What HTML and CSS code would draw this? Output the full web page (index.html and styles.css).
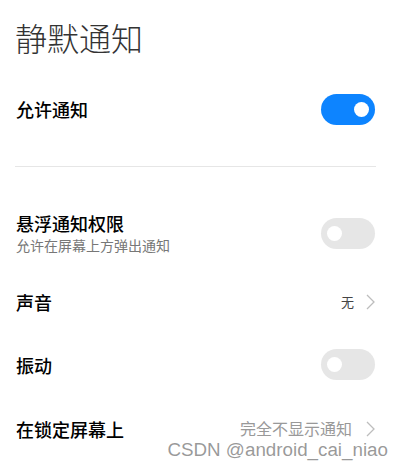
FILE: index.html
```html
<!DOCTYPE html>
<html lang="zh-CN">

<head>
    <meta charset="UTF-8">
    <meta name="viewport" content="width=device-width, initial-scale=1.0">
    <title>静默通知</title>
    <link rel="stylesheet" href="styles.css">
</head>

<body>
    <div id="page">
        <h1 class="page-title">静默通知</h1>

        <div class="row">
            <span class="row-label">允许通知</span>
            <span class="switch on"><span class="knob"></span></span>
        </div>

        <div class="divider"></div>

        <div class="list">
            <div class="row tall">
                <div class="row-text">
                    <span class="row-label">悬浮通知权限</span>
                    <span class="row-sub">允许在屏幕上方弹出通知</span>
                </div>
                <span class="switch"><span class="knob"></span></span>
            </div>

            <div class="row">
                <span class="row-label">声音</span>
                <span class="row-value">
                    <span class="value-small">无</span>
                    <svg class="chevron" width="9" height="16" viewBox="0 0 9 16">
                        <polyline points="1,1 8,8 1,15" fill="none" stroke="#bdbdbd" stroke-width="1.3" />
                    </svg>
                </span>
            </div>

            <div class="row">
                <span class="row-label">振动</span>
                <span class="switch"><span class="knob"></span></span>
            </div>

            <div class="row last">
                <span class="row-label">在锁定屏幕上</span>
                <span class="row-value wide">
                    <span class="value-text">完全不显示通知</span>
                    <svg class="chevron" width="9" height="16" viewBox="0 0 9 16">
                        <polyline points="1,1 8,8 1,15" fill="none" stroke="#bdbdbd" stroke-width="1.3" />
                    </svg>
                </span>
            </div>
        </div>
    </div>

    <div class="watermark">CSDN @android_cai_niao</div>
</body>

</html>
```

FILE: styles.css
```css
body {
    margin: 0;
    background-color: #fff;
    font-family: "Noto Sans CJK SC", "Noto Sans", sans-serif;
    color: #000;
    overflow: hidden;
}

#page {
    padding: 17px 26px 0 16px;
}

.page-title {
    margin: 0 0 20px -1px;
    font-size: 32px;
    line-height: 40px;
    font-weight: 300;
    color: #333;
}

.row {
    height: 64px;
    display: flex;
    align-items: center;
    justify-content: space-between;
}

.list .row {
    height: 63px;
}

.list .row.tall {
    height: 74px;
}

.list .row.last {
    height: 65px;
}

.row-text {
    display: flex;
    flex-direction: column;
}

.row-label {
    font-size: 18px;
    line-height: 24px;
    font-weight: 500;
}

.row-sub {
    font-size: 14px;
    line-height: 20px;
    color: #777;
}

.divider {
    height: 1px;
    background-color: #e6e6e6;
    margin: 25px -1px 0 -1px;
}

.list {
    padding-top: 29px;
}

.row-value {
    display: flex;
    align-items: center;
    gap: 12px;
}

.row-value.wide {
    gap: 14px;
}

.value-small {
    font-size: 13px;
    color: #444;
}

.value-text {
    font-size: 16px;
    line-height: 17px;
    color: #999;
}

.switch {
    position: relative;
    width: 54px;
    height: 31px;
    border-radius: 16px;
    background-color: #e6e6e6;
}

.switch.on {
    background-color: #0d84ff;
}

.knob {
    position: absolute;
    top: 8px;
    left: 6px;
    width: 15px;
    height: 15px;
    border-radius: 50%;
    background-color: #fff;
}

.switch.on .knob {
    left: 33px;
}

.watermark {
    position: absolute;
    right: 13px;
    bottom: 12px;
    font-family: "Liberation Sans", Arial, sans-serif;
    font-size: 18.8px;
    line-height: 18px;
    color: rgba(120, 120, 120, 0.75);
}
```
